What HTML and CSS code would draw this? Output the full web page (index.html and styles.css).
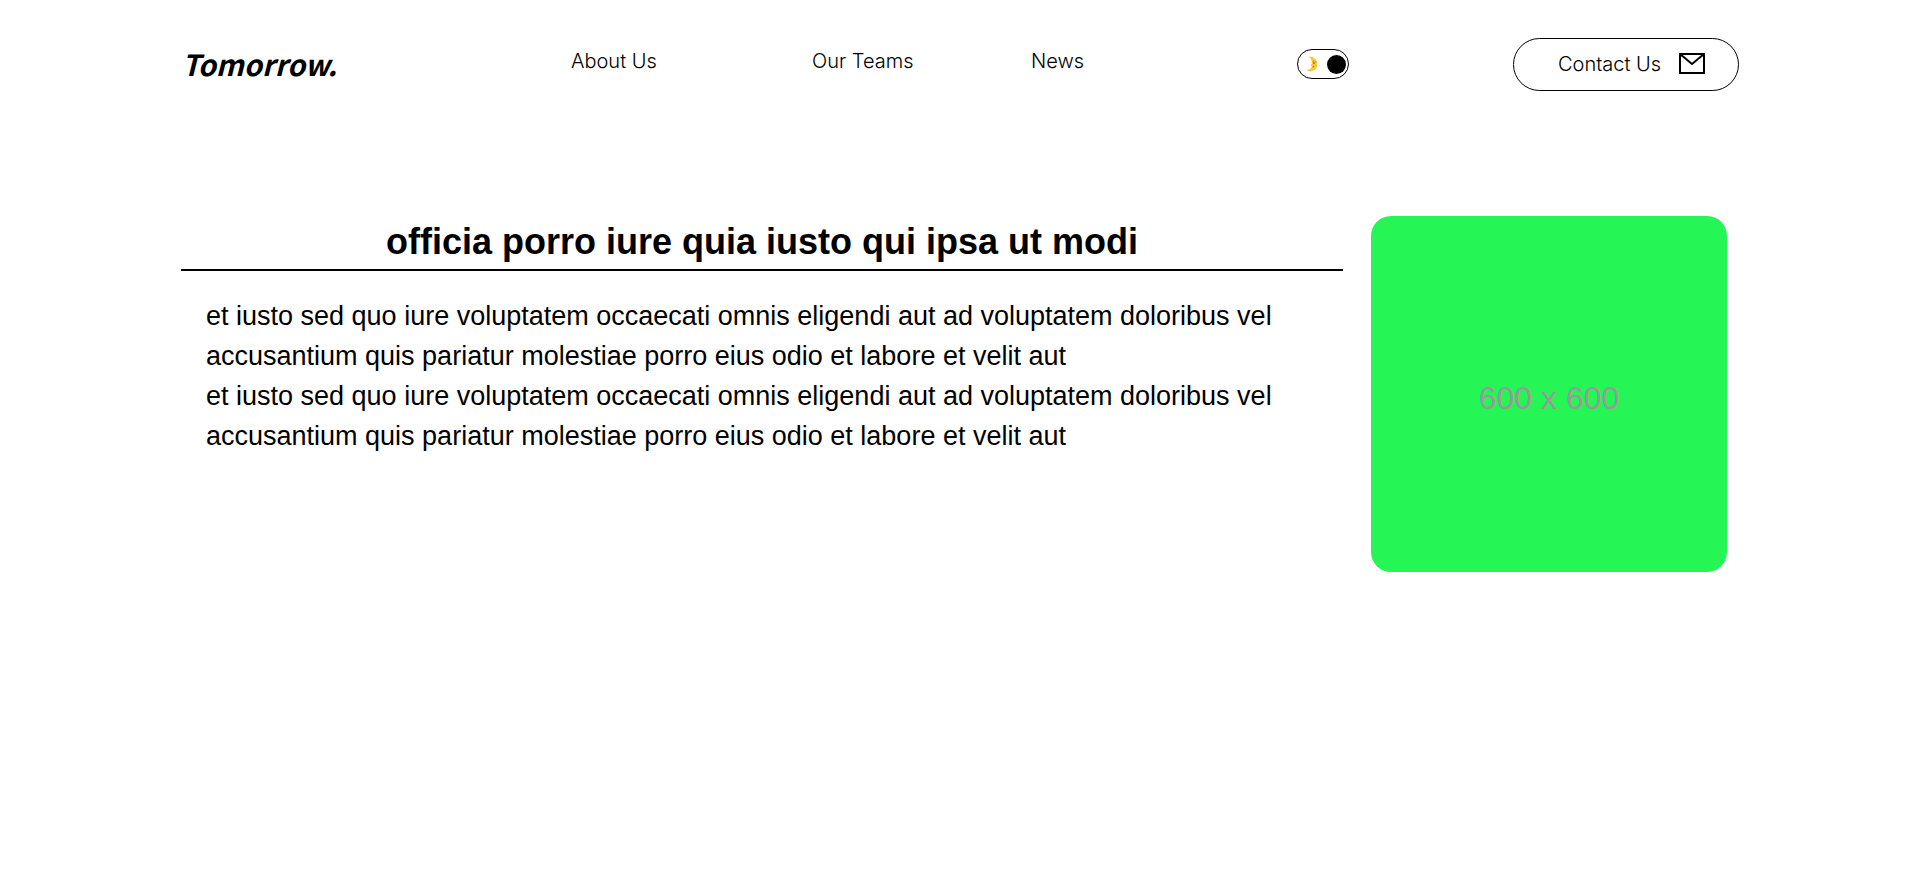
FILE: index.html
```html
<!DOCTYPE html>
<html lang="en">
<head>
<meta charset="utf-8">
<meta name="viewport" content="width=device-width, initial-scale=1">
<title>Tomorrow.</title>
<link rel="stylesheet" href="styles.css">
</head>
<body>
<div class="page">
  <header class="header">
    <a class="logo" href="#">Tomorrow.</a>
    <nav class="nav">
      <a class="nav-link" href="#">About Us</a>
      <a class="nav-link" href="#">Our Teams</a>
      <a class="nav-link" href="#">News</a>
    </nav>
    <button class="toggle" type="button" aria-label="Toggle dark mode">
      <svg class="moon" viewBox="0 0 12 16" aria-hidden="true">
        <path d="M2.600 .4C7.500 .2 11.400 3.400 11.400 8.200C11.400 12.600 7.600 15.600 3.800 15.400C2.400 15.400 1.200 14.800 .6 13.800C3.600 13.600 5.600 12.200 5.800 10.400L4.600 9.300L5.900 7.400C6 4.600 5 2 2.600 .4Z" fill="#fcc838"/>
        <path d="M6.800 5.400L8.200 4.800M9 6.400L9.800 5.600M6.600 11L8.200 10.400" stroke="#a87420" stroke-width="1" fill="none"/>
        <circle cx="8" cy="7" r=".8" fill="#5d3b16"/>
      </svg>
      <span class="knob"></span>
    </button>
    <button class="contact" type="button">
      Contact Us
      <svg class="mail" viewBox="0 0 26 21" aria-hidden="true">
        <path d="M1 1H25V20H1ZM1 1L13 11L25 1" fill="none" stroke="#000" stroke-width="2"/>
      </svg>
    </button>
  </header>
  <main class="post">
    <article class="article">
      <h1 class="title">officia porro iure quia iusto qui ipsa ut modi</h1>
      <p class="text">et iusto sed quo iure voluptatem occaecati omnis eligendi aut ad voluptatem doloribus vel<br>accusantium quis pariatur molestiae porro eius odio et labore et velit aut<br>et iusto sed quo iure voluptatem occaecati omnis eligendi aut ad voluptatem doloribus vel<br>accusantium quis pariatur molestiae porro eius odio et labore et velit aut</p>
    </article>
    <div class="picture" role="img" aria-label="600 x 600">600 x 600</div>
  </main>
</div>
</body>
</html>
```
FILE: styles.css
```css
* { box-sizing: border-box; }

body {
  margin: 0;
  background: #fff;
  color: #000;
  font-family: "Liberation Sans", Arial, sans-serif;
}

.page {
  padding: 38px 181px;
}

.header {
  display: flex;
  align-items: center;
  font-family: Inter, sans-serif;
  font-size: 20px;
  font-weight: 300;
}

.logo {
  flex: 0 0 390px;
  padding: 0 0 4px 1px;
  color: inherit;
  text-decoration: none;
  font: italic 700 29px/36px "Noto Sans CJK SC", "Noto Sans", sans-serif;
}

.nav {
  flex: 1;
  display: grid;
  grid-template-columns: 241fr 219fr 266fr;
  padding-bottom: 8px;
}

.nav-link {
  color: inherit;
  text-decoration: none;
}

.toggle {
  display: flex;
  align-items: center;
  justify-content: space-between;
  width: 52px;
  height: 30px;
  margin: 0 164px 1px 0;
  padding: 0 2px 0 8px;
  border: 1px solid #000;
  border-radius: 15px;
  background: #fff;
}

.moon {
  width: 12px;
  height: 16px;
}

.knob {
  width: 19px;
  height: 19px;
  border-radius: 50%;
  background: #000;
}

.contact {
  display: flex;
  align-items: center;
  justify-content: space-between;
  width: 226px;
  height: 53px;
  padding: 0 33px 2px 44px;
  border: 1px solid #000;
  border-radius: 27px;
  background: #fff;
  color: #000;
  font: inherit;
  white-space: nowrap;
}

.mail {
  width: 26px;
  height: 21px;
}

.post {
  display: flex;
  align-items: flex-start;
  gap: 28px;
  padding: 125px 12px 0 0;
}

.article {
  flex: 1;
}

.title {
  margin: 0;
  padding: 6px 0 7px;
  border-bottom: 2px solid #000;
  font-size: 36px;
  line-height: 40px;
  text-align: center;
}

.text {
  margin: 25px 0 0;
  padding: 0 25px;
  font-size: 27px;
  line-height: 40px;
}

.picture {
  display: flex;
  align-items: center;
  justify-content: center;
  width: 356px;
  aspect-ratio: 1;
  padding-top: 8px;
  border-radius: 20px;
  background: #25f656;
  color: #999;
  font-size: 32px;
}
```
